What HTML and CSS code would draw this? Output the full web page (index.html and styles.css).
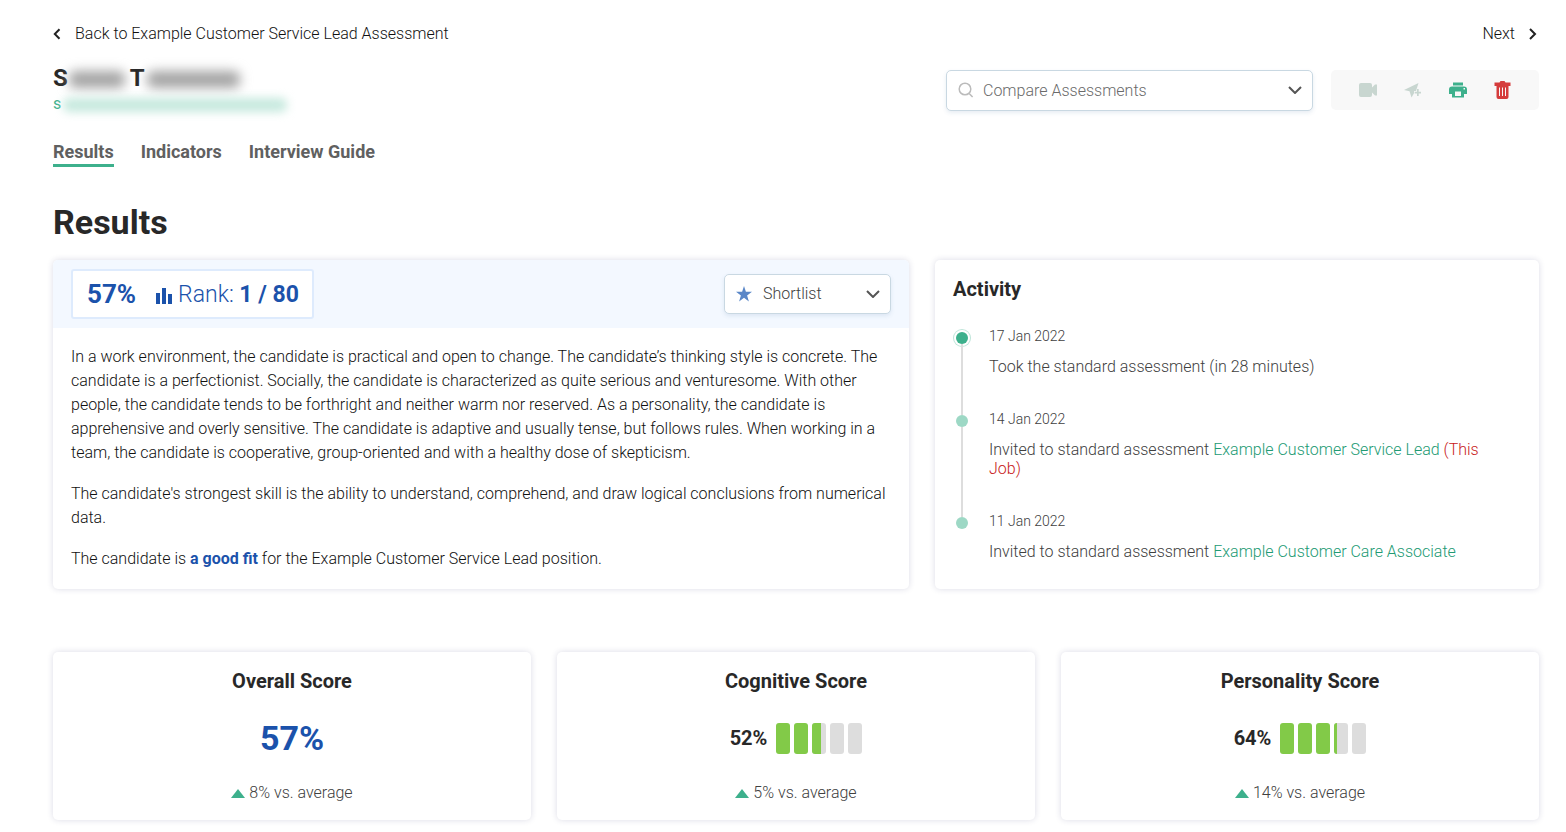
FILE: index.html
```html
<!DOCTYPE html>
<html lang="en">
<head>
    <meta charset="UTF-8">
    <meta name="viewport" content="width=device-width, initial-scale=1.0">
    <title>Candidate Results</title>
    <link rel="stylesheet" href="styles.css">
</head>
<body>
    <div class="page">
        <nav class="pager">
            <a href="#back">
                <svg width="8" height="12" viewBox="0 0 8 12"><path d="M6.5 1.2 L1.8 6 L6.5 10.8"/></svg>
                Back to Example Customer Service Lead Assessment
            </a>
            <a href="#next">
                Next
                <svg width="10" height="12" viewBox="0 0 10 12"><path d="M1 1 L6 6 L1 11"/></svg>
            </a>
        </nav>

        <header class="candidate">
            <div class="person">
                <div class="name">S<span class="mask mask-first"></span>T<span class="mask mask-last"></span></div>
                <a class="email" href="#email">s<span class="mask mask-email"></span></a>
            </div>
            <div class="select compare">
                <svg class="search-icon" width="16" height="16" viewBox="0 0 16 16"><circle cx="7" cy="7" r="5.8"/><path d="M11.2 11.4 L14.6 15"/></svg>
                <select aria-label="Compare Assessments">
                    <option>Compare Assessments</option>
                </select>
                <svg class="chevron" width="14" height="8" viewBox="0 0 14 8"><path d="M1 1 L7 7 L13 1"/></svg>
            </div>
            <div class="actions">
                <button type="button" class="muted" aria-label="Video">
                    <svg width="20" height="20" viewBox="0 0 20 20"><path d="M3 3h9a2 2 0 0 1 2 2v2.500L17 4.500h2v11h-2L14 12.500V15a2 2 0 0 1-2 2H3a2 2 0 0 1-2-2V5a2 2 0 0 1 2-2z"/></svg>
                </button>
                <button type="button" class="muted" aria-label="Invite">
                    <svg width="20" height="20" viewBox="0 0 20 20"><path d="M15.500 3 L1 10 L6.500 11.300 L8.500 17.500 L11 13.300 V11 H13 Z"/><path d="M14 9h1.700v2.700H18v1.700h-2.300V16H14v-2.600h-2.300v-1.700H14z"/></svg>
                </button>
                <button type="button" class="print" aria-label="Print">
                    <svg width="20" height="20" viewBox="0 0 20 20"><path d="M5 2.500h10v3H5z"/><path fill-rule="evenodd" d="M4 6.500h12a3 3 0 0 1 3 3V14h-3v3.500H4V14H1V9.500a3 3 0 0 1 3-3zM7 11.500v4.500h6v-4.500zM15.500 8v1.500H17V8z"/></svg>
                </button>
                <button type="button" class="delete" aria-label="Delete">
                    <svg width="20" height="20" viewBox="0 0 20 20"><path d="M7.500 1h4l1 1.500h5V6h-16V2.500h5z"/><path fill-rule="evenodd" d="M3.500 6h12v11a2 2 0 0 1-2 2h-8a2 2 0 0 1-2-2zM6 7.500V16h1V7.500zM9 7.500V16h1V7.500zM12 7.500V16h1V7.500z"/></svg>
                </button>
            </div>
        </header>

        <nav class="tabs">
            <a class="active" href="#results">Results</a>
            <a href="#indicators">Indicators</a>
            <a href="#guide">Interview Guide</a>
        </nav>

        <h1>Results</h1>

        <main class="grid">
            <section class="card summary">
                <div class="summary-head">
                    <div class="rank">
                        <strong class="percent">57%</strong>
                        <svg width="16" height="16" viewBox="0 0 16 16"><path d="M0 5h4v11H0zM6 0h4v16H6zM12 6h4v10h-4z"/></svg>
                        <span>Rank: <strong>1 / 80</strong></span>
                    </div>
                    <div class="select shortlist">
                        <svg class="star" width="16" height="16" viewBox="0 0 16 16"><path d="M8 0 L9.900 5.800 H16 L11.100 9.400 L12.900 15.400 L8 11.800 L3.100 15.400 L4.900 9.400 L0 5.800 H6.100 Z"/></svg>
                        <select aria-label="Status">
                            <option>Shortlist</option>
                        </select>
                        <svg class="chevron" width="14" height="8" viewBox="0 0 14 8"><path d="M1 1 L7 7 L13 1"/></svg>
                    </div>
                </div>
                <div class="summary-text">
                    <p>In a work environment, the candidate is practical and open to change. The candidate’s thinking style is concrete. The candidate is a perfectionist. Socially, the candidate is characterized as quite serious and venturesome. With other people, the candidate tends to be forthright and neither warm nor reserved. As a personality, the candidate is apprehensive and overly sensitive. The candidate is adaptive and usually tense, but follows rules. When working in a team, the candidate is cooperative, group-oriented and with a healthy dose of skepticism.</p>
                    <p>The candidate's strongest skill is the ability to understand, comprehend, and draw logical conclusions from numerical data.</p>
                    <p>The candidate is <strong>a good fit</strong> for the Example Customer Service Lead position.</p>
                </div>
            </section>

            <section class="card activity">
                <h2>Activity</h2>
                <ul class="timeline">
                    <li class="current">
                        <time>17 Jan 2022</time>
                        <p>Took the standard assessment (in 28 minutes)</p>
                    </li>
                    <li>
                        <time>14 Jan 2022</time>
                        <p>Invited to standard assessment <a href="#lead">Example Customer Service Lead</a> <span class="this-job">(This Job)</span></p>
                    </li>
                    <li>
                        <time>11 Jan 2022</time>
                        <p>Invited to standard assessment <a href="#care">Example Customer Care Associate</a></p>
                    </li>
                </ul>
            </section>

            <section class="card score">
                <h2>Overall Score</h2>
                <div class="value overall">57%</div>
                <div class="versus">8% vs. average</div>
            </section>

            <section class="card score">
                <h2>Cognitive Score</h2>
                <div class="value">
                    52%
                    <div class="bars">
                        <span><i style="width: 100%"></i></span>
                        <span><i style="width: 100%"></i></span>
                        <span><i style="width: 60%"></i></span>
                        <span></span>
                        <span></span>
                    </div>
                </div>
                <div class="versus">5% vs. average</div>
            </section>

            <section class="card score">
                <h2>Personality Score</h2>
                <div class="value">
                    64%
                    <div class="bars">
                        <span><i style="width: 100%"></i></span>
                        <span><i style="width: 100%"></i></span>
                        <span><i style="width: 100%"></i></span>
                        <span><i style="width: 20%"></i></span>
                        <span></span>
                    </div>
                </div>
                <div class="versus">14% vs. average</div>
            </section>
        </main>
    </div>
</body>
</html>
```
FILE: styles.css
```css
* {
    box-sizing: border-box;
}

body {
    margin: 0;
    font-family: Roboto, Arial, sans-serif;
    font-size: 16px;
    font-weight: 300;
    color: #111;
    background-color: #fff;
}

h1, h2, p, ul {
    margin: 0;
    padding: 0;
}

a {
    color: inherit;
    text-decoration: none;
}

strong {
    font-weight: 700;
}

.page {
    padding: 24px 27px 12px 53px;
}

/* Top links */
.pager {
    display: flex;
    justify-content: space-between;
    line-height: 20px;
}

.pager a {
    display: flex;
    align-items: center;
    gap: 14px;
}

.pager svg {
    fill: none;
    stroke: #222;
    stroke-width: 2;
}

/* Candidate header */
.candidate {
    display: flex;
    align-items: center;
    gap: 18px;
    margin-top: 20px;
}

.person {
    flex: 1;
}

.name {
    font-size: 24px;
    font-weight: 700;
    line-height: 28px;
    color: #282828;
}

.email {
    display: block;
    color: #3db08c;
    font-weight: 400;
    line-height: 24px;
}

.mask {
    display: inline-block;
    vertical-align: middle;
    height: 17px;
    border-radius: 6px;
    background-color: #a4a4a4;
    filter: blur(6px);
}

.mask-first {
    width: 56px;
    margin: 0 5px 0 1px;
}

.mask-last {
    width: 93px;
    margin-left: 2px;
}

.mask-email {
    width: 224px;
    height: 14px;
    margin-left: 2px;
    background-color: #c6e9de;
    filter: blur(5px);
}

.select {
    display: flex;
    position: relative;
    align-items: center;
}

.select select {
    appearance: none;
    width: 100%;
    height: 40px;
    border: 1px solid #c9d8e2;
    border-radius: 5px;
    background-color: #fff;
    box-shadow: 0 2px 4px rgba(60, 110, 160, 0.12);
    padding: 0 36px 1px 38px;
    font-family: inherit;
    font-size: 16px;
    font-weight: inherit;
    color: #404040;
}

.select svg {
    position: absolute;
    left: 12px;
    pointer-events: none;
}

.select .chevron {
    left: auto;
    right: 11px;
    fill: none;
    stroke: #555;
    stroke-width: 2;
}

.compare {
    width: 367px;
}

.compare select {
    height: 41px;
    padding: 0 36px;
    color: #6a6a6a;
}

.search-icon {
    fill: none;
    stroke: #bbb;
    stroke-width: 1.5;
}

.actions {
    display: flex;
    justify-content: center;
    gap: 25px;
    width: 208px;
    padding: 10px 0;
    border-radius: 5px;
    background-color: #f8f8f8;
}

.actions button {
    width: 20px;
    height: 20px;
    padding: 0;
    border: none;
    background: none;
    cursor: pointer;
}

.actions svg {
    display: block;
    fill: currentColor;
}

.actions .muted {
    color: #c8d6d0;
}

.actions .print {
    color: #3db08c;
}

.actions .delete {
    color: #d53c3c;
}

/* Tabs */
.tabs {
    display: flex;
    gap: 27px;
    margin-top: 24px;
    font-size: 18px;
    font-weight: 700;
    color: #606060;
}

.tabs a {
    line-height: 24px;
    border-bottom: 3px solid transparent;
}

.tabs .active {
    border-color: #3db08c;
}

h1 {
    margin: 35px 0 18px;
    font-size: 34px;
    font-weight: 700;
    line-height: 40px;
    color: #282828;
}

h2 {
    font-size: 20px;
    font-weight: 700;
    line-height: 24px;
    color: #282828;
}

/* Cards */
.grid {
    display: grid;
    grid-template-columns: repeat(12, 1fr);
    column-gap: 26px;
    row-gap: 63px;
}

.card {
    border-radius: 5px;
    background-color: #fff;
    box-shadow: 0 0 6px rgba(40, 40, 100, 0.16);
}

.summary {
    grid-column: span 7;
    overflow: hidden;
}

.summary-head {
    display: flex;
    justify-content: space-between;
    align-items: center;
    height: 68px;
    padding: 0 18px;
    background-color: #f3f8ff;
}

.rank {
    display: flex;
    align-items: center;
    height: 50px;
    padding: 0 13px 0 14px;
    border: 2px solid #deebfd;
    border-radius: 3px;
    background-color: #fff;
    font-size: 23px;
    color: #1b52ab;
}

.rank svg {
    margin: 4px 6px 0 20px;
    fill: currentColor;
}

.rank .percent {
    font-size: 26px;
}

.shortlist {
    width: 167px;
}

.star {
    fill: #5a87c8;
}

.summary-text {
    padding: 17px 18px 18px;
    line-height: 24px;
}

.summary-text p + p {
    margin-top: 17px;
}

.summary-text strong {
    color: #1b52ab;
}

/* Activity timeline */
.activity {
    grid-column: span 5;
    padding: 17px 18px;
}

.timeline {
    margin-top: 27px;
    list-style: none;
    color: #404040;
}

.timeline li {
    position: relative;
    padding: 0 36px 35px;
}

.timeline li::before {
    content: "";
    position: absolute;
    top: 4px;
    left: 3px;
    width: 12px;
    height: 12px;
    border-radius: 50%;
    background-color: #9dd8c5;
}

.timeline .current::before {
    background-color: #3db08c;
    box-shadow: 0 0 0 2px #fff, 0 0 0 3px #bfe5d9;
}

/* Line down to the next dot */
.timeline li::after {
    content: "";
    position: absolute;
    top: 16px;
    bottom: -4px;
    left: 8px;
    width: 2px;
    background-color: #ddd;
}

.timeline li:last-child {
    padding-bottom: 0;
}

.timeline li:last-child::after {
    display: none;
}

.timeline time {
    display: block;
    font-size: 14px;
    line-height: 16px;
}

.timeline p {
    margin-top: 13px;
    line-height: 19px;
}

.timeline a {
    color: #229a73;
}

.this-job {
    color: #c82020;
}

/* Scores */
.score {
    grid-column: span 4;
    padding: 17px 18px;
    text-align: center;
}

.value {
    display: flex;
    justify-content: center;
    align-items: center;
    gap: 9px;
    height: 40px;
    margin: 25px 0;
    font-size: 20px;
    font-weight: 700;
    color: #282828;
}

.overall {
    font-size: 34px;
    color: #1b52ab;
}

.bars {
    display: flex;
    gap: 4px;
}

.bars span {
    width: 14px;
    height: 31px;
    border-radius: 3px;
    background-color: #ddd;
    overflow: hidden;
}

.bars i {
    display: block;
    height: 100%;
    background-color: #82ca48;
}

.versus {
    display: flex;
    justify-content: center;
    align-items: center;
    gap: 4px;
    line-height: 20px;
    color: #404040;
}

.versus::before {
    content: "";
    border: 7px solid transparent;
    border-top: none;
    border-bottom: 9px solid #3db08c;
}
```
